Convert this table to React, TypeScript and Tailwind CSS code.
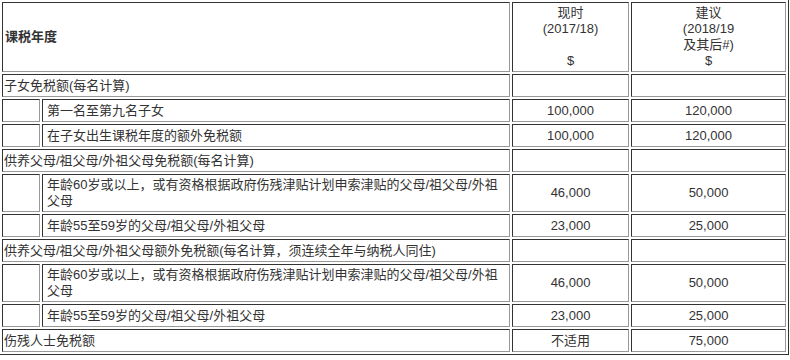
const cell =
  "border border-solid border-t-[#333] border-l-[#333] border-r-[#999] border-b-[#999] pt-[3px] pb-[2px] align-middle";
const dbl =
  "border border-solid border-t-[#333] border-l-[#333] border-r-[#999] border-b-[#999] py-[2px] align-middle";

type Row = {
  label: string;
  now?: string;
  next?: string;
  indent?: boolean;
  tall?: boolean;
};

const ROWS: Row[] = [
  { label: "子女免税额(每名计算)" },
  { label: "第一名至第九名子女", now: "100,000", next: "120,000", indent: true },
  { label: "在子女出生课税年度的额外免税额", now: "100,000", next: "120,000", indent: true },
  { label: "供养父母/祖父母/外祖父母免税额(每名计算)" },
  {
    label: "年龄60岁或以上，或有资格根据政府伤残津贴计划申索津贴的父母/祖父母/外祖父母",
    now: "46,000",
    next: "50,000",
    indent: true,
    tall: true,
  },
  { label: "年龄55至59岁的父母/祖父母/外祖父母", now: "23,000", next: "25,000", indent: true },
  { label: "供养父母/祖父母/外祖父母额外免税额(每名计算，须连续全年与纳税人同住)" },
  {
    label: "年龄60岁或以上，或有资格根据政府伤残津贴计划申索津贴的父母/祖父母/外祖父母",
    now: "46,000",
    next: "50,000",
    indent: true,
    tall: true,
  },
  { label: "年龄55至59岁的父母/祖父母/外祖父母", now: "23,000", next: "25,000", indent: true },
  { label: "伤残人士免税额", now: "不适用", next: "75,000" },
];

export default function App() {
  return (
    <div className="bg-white w-[790px] h-[360px] overflow-hidden font-['Liberation_Sans','Noto_Sans_CJK_SC',sans-serif] text-[13px] leading-[16px] text-[#333]">
      <table className="table-fixed border-separate border-spacing-[2px] w-[789px] border-r border-b border-solid border-r-[#333] border-b-[#333]">
        <colgroup>
          <col className="w-[38px]" />
          <col className="w-[468px]" />
          <col className="w-[117px]" />
          <col className="w-[155px]" />
        </colgroup>
        <tbody>
          {/* header */}
          <tr>
            <td colSpan={2} className={`${dbl} pl-[2px] font-bold`}>
              课税年度
            </td>
            <td className={`${dbl} text-center align-top`}>
              现时
              <br />
              (2017/18)
              <br />
              <br />$
            </td>
            <td className={`${dbl} text-center align-top`}>
              建议
              <br />
              (2018/19
              <br />
              及其后#)
              <br />$
            </td>
          </tr>

          {ROWS.map((r, i) => {
            const c = r.tall ? dbl : cell;
            return (
              <tr key={i}>
                {r.indent ? (
                  <>
                    <td className={c}></td>
                    <td className={`${c} pl-1`}>{r.label}</td>
                  </>
                ) : (
                  <td colSpan={2} className={`${c} pl-px`}>
                    {r.label}
                  </td>
                )}
                <td className={`${c} text-center`}>{r.now}</td>
                <td className={`${c} text-center`}>{r.next}</td>
              </tr>
            );
          })}
        </tbody>
      </table>
    </div>
  );
}
